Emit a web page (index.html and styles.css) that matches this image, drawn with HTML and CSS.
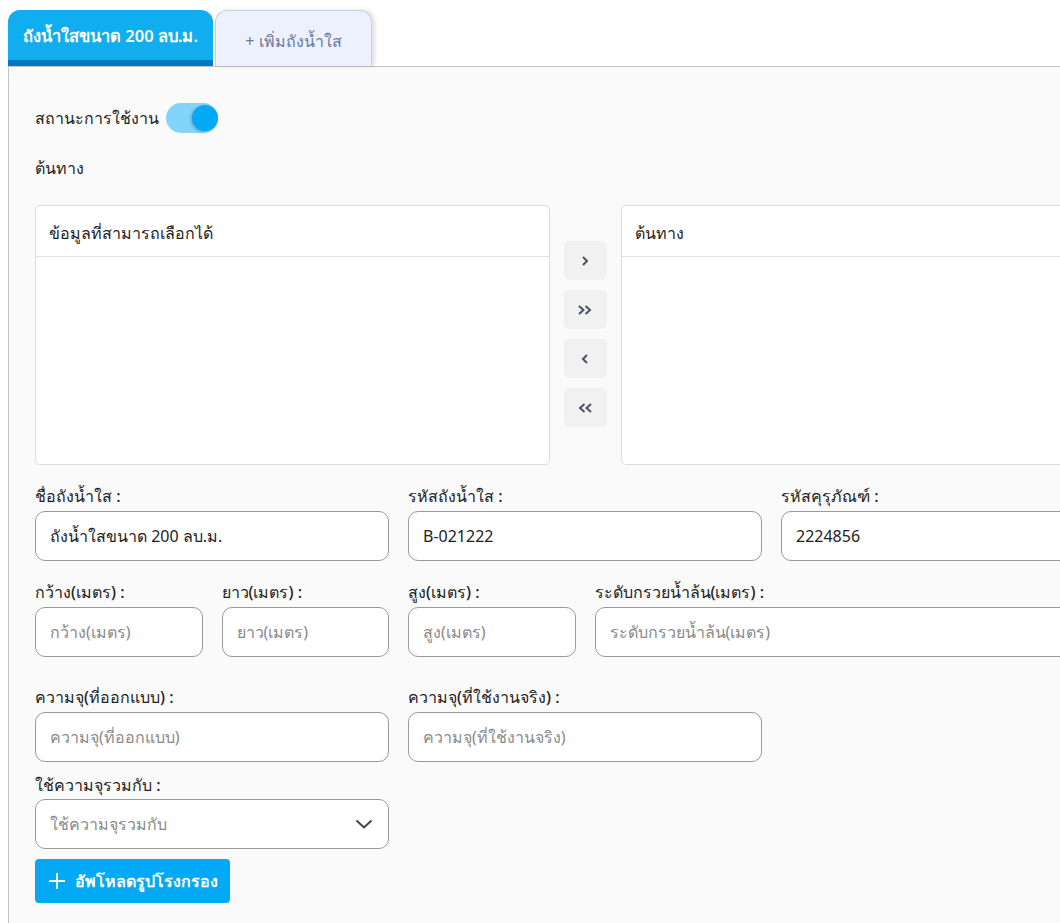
FILE: index.html
```html
<!DOCTYPE html>
<html lang="th">
<head>
    <meta charset="UTF-8">
    <meta name="viewport" content="width=device-width, initial-scale=1.0">
    <title>ถังน้ำใส</title>
    <link rel="stylesheet" href="styles.css">
</head>
<body>
    <div class="tabs">
        <div class="tab active">ถังน้ำใสขนาด 200 ลบ.ม.</div>
        <div class="tab add">+ เพิ่มถังน้ำใส</div>
    </div>

    <div class="panel">
        <div class="status-row">
            <span>สถานะการใช้งาน</span>
            <span class="switch"><span class="knob"></span></span>
        </div>

        <div class="section-title">ต้นทาง</div>

        <!-- dual list -->
        <div class="picklist">
            <div class="list-box">
                <div class="list-head">ข้อมูลที่สามารถเลือกได้</div>
            </div>
            <div class="list-buttons">
                <button class="move-btn"><svg width="14" height="14" viewBox="0 0 14 14"><polyline points="5,3 9,7 5,11" /></svg></button>
                <button class="move-btn"><svg width="16" height="14" viewBox="0 0 16 14"><polyline points="2,3 6.5,7 2,11" /><polyline points="8.5,3 13,7 8.5,11" /></svg></button>
                <button class="move-btn"><svg width="14" height="14" viewBox="0 0 14 14"><polyline points="9,3 5,7 9,11" /></svg></button>
                <button class="move-btn"><svg width="16" height="14" viewBox="0 0 16 14"><polyline points="7.5,3 3,7 7.5,11" /><polyline points="14,3 9.5,7 14,11" /></svg></button>
            </div>
            <div class="list-box">
                <div class="list-head">ต้นทาง</div>
            </div>
        </div>

        <div class="form-grid row-1">
            <div class="field col-4">
                <label>ชื่อถังน้ำใส :</label>
                <input class="input" value="ถังน้ำใสขนาด 200 ลบ.ม.">
            </div>
            <div class="field col-4">
                <label>รหัสถังน้ำใส :</label>
                <input class="input" value="B-021222">
            </div>
            <div class="field col-4">
                <label>รหัสคุรุภัณฑ์ :</label>
                <input class="input" value="2224856">
            </div>
        </div>

        <div class="form-grid row-2">
            <div class="field col-2">
                <label>กว้าง(เมตร) :</label>
                <input class="input" placeholder="กว้าง(เมตร)">
            </div>
            <div class="field col-2">
                <label>ยาว(เมตร) :</label>
                <input class="input" placeholder="ยาว(เมตร)">
            </div>
            <div class="field col-2">
                <label>สูง(เมตร) :</label>
                <input class="input" placeholder="สูง(เมตร)">
            </div>
            <div class="field col-6">
                <label>ระดับกรวยน้ำล้น(เมตร) :</label>
                <input class="input" placeholder="ระดับกรวยน้ำล้น(เมตร)">
            </div>
        </div>

        <div class="form-grid row-3">
            <div class="field col-4">
                <label>ความจุ(ที่ออกแบบ) :</label>
                <input class="input" placeholder="ความจุ(ที่ออกแบบ)">
            </div>
            <div class="field col-4">
                <label>ความจุ(ที่ใช้งานจริง) :</label>
                <input class="input" placeholder="ความจุ(ที่ใช้งานจริง)">
            </div>
        </div>

        <div class="form-grid row-4">
            <div class="field col-4">
                <label>ใช้ความจุรวมกับ :</label>
                <div class="input select">
                    <span class="placeholder">ใช้ความจุรวมกับ</span>
                    <svg width="18" height="10" viewBox="0 0 18 10"><polyline points="1.5,1.5 9,8.5 16.5,1.5" /></svg>
                </div>
            </div>
        </div>

        <button class="upload-btn">
            <svg width="18" height="18" viewBox="0 0 18 18"><line x1="9" y1="1" x2="9" y2="17" /><line x1="1" y1="9" x2="17" y2="9" /></svg>
            <span>อัพโหลดรูปโรงกรอง</span>
        </button>
    </div>
</body>
</html>
```

FILE: styles.css
```css
html, body {
    overflow: hidden;
}
body {
    margin: 0;
    background-color: #ffffff;
    color: #222222;
    font-family: "Noto Sans", "Open Sans", sans-serif;
    font-size: 16px;
}
.tabs {
    display: flex;
    gap: 2px;
    padding: 10px 0 0 8px;
    height: 56px;
}
.tab {
    display: flex;
    align-items: center;
    justify-content: center;
    box-sizing: border-box;
    height: 56px;
    border-radius: 12px 12px 0 0;
    font-size: 16px;
}
.tab.active {
    width: 205px;
    background-color: #10aeee;
    color: #ffffff;
    font-weight: 600;
    font-size: 16.5px;
    border-bottom: 6px solid #0279bf;
    padding-top: 1px;
}
.tab.add {
    width: 157px;
    background-color: #edf1fe;
    color: #6b78a3;
    border: 1px solid #c9cee0;
    border-bottom: none;
    box-shadow: 3px 0 4px rgba(0, 0, 0, 0.12);
    padding-top: 6px;
}
.panel {
    margin-left: 8px;
    width: 1154px;
    min-height: 900px;
    box-sizing: border-box;
    border-top: 1px solid #c4c4c4;
    border-left: 1px solid #c4c4c4;
    background-color: #fafafa;
    padding: 36px 26px 20px;
}
.status-row {
    display: flex;
    align-items: center;
    gap: 7px;
    height: 30px;
}
.switch {
    position: relative;
    width: 52px;
    height: 30px;
    border-radius: 15px;
    background-color: #81d4fa;
}
.knob {
    position: absolute;
    right: 0;
    top: 2px;
    width: 26px;
    height: 26px;
    border-radius: 50%;
    background-color: #03a9f4;
    box-shadow: -1px 1px 3px rgba(0, 0, 0, 0.25);
}
.section-title {
    margin-top: 23px;
    line-height: 24px;
}
.picklist {
    display: flex;
    gap: 14px;
    margin-top: 25px;
    width: 1100px;
}
.list-box {
    flex: 1;
    height: 260px;
    box-sizing: border-box;
    background-color: #ffffff;
    border: 1px solid #dcdcdc;
    border-radius: 5px;
}
.list-head {
    height: 51px;
    box-sizing: border-box;
    display: flex;
    align-items: center;
    padding: 4px 0 0 13px;
    border-bottom: 1px solid #e2e2e2;
}
.list-buttons {
    display: flex;
    flex-direction: column;
    gap: 10px;
    padding-top: 36px;
}
.move-btn {
    width: 43px;
    height: 39px;
    border: none;
    border-radius: 5px;
    background-color: #f1f1f1;
    display: flex;
    align-items: center;
    justify-content: center;
    padding: 0;
}
.move-btn svg polyline {
    fill: none;
    stroke: #4b5262;
    stroke-width: 2;
}
.form-grid {
    display: grid;
    grid-template-columns: repeat(12, 1fr);
    column-gap: 19px;
    width: 1100px;
}
.col-2 { grid-column: span 2; }
.col-4 { grid-column: span 4; }
.col-6 { grid-column: span 6; }
.row-1 { margin-top: 19px; }
.row-2 { margin-top: 19px; }
.row-3 { margin-top: 28px; }
.row-4 { margin-top: 11px; }
.field label {
    display: block;
    line-height: 24px;
    margin-bottom: 3px;
    font-weight: 500;
    color: #222222;
}
.input {
    display: block;
    width: 100%;
    height: 50px;
    box-sizing: border-box;
    border: 1px solid #9a9a9a;
    border-radius: 10px;
    background-color: #ffffff;
    padding: 0 14px;
    font-family: inherit;
    font-size: 16px;
    color: #222222;
}
.input::placeholder,
.placeholder {
    color: #8a8a8a;
}
.row-4 .field label {
    margin-bottom: 2px;
}
.select {
    display: flex;
    align-items: center;
    justify-content: space-between;
}
.select svg {
    margin-right: 1px;
}
.select svg polyline {
    fill: none;
    stroke: #444444;
    stroke-width: 2;
}
.upload-btn {
    margin-top: 10px;
    height: 44px;
    border: none;
    border-radius: 4px;
    background-color: #03a9f4;
    color: #ffffff;
    font-family: inherit;
    font-size: 16px;
    font-weight: 600;
    white-space: nowrap;
    display: flex;
    align-items: center;
    gap: 9px;
    padding: 0 12px 0 13px;
}
.upload-btn svg line {
    stroke: #ffffff;
    stroke-width: 2;
}
```
